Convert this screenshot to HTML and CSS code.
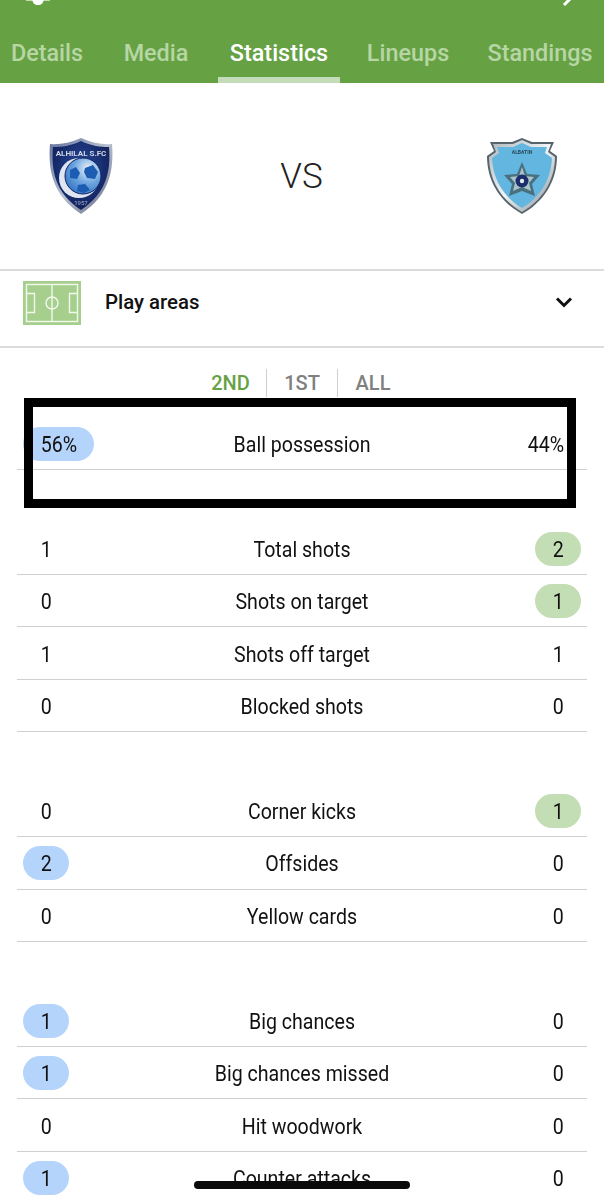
FILE: index.html
```html
<!DOCTYPE html>
<html lang="en">
<head>
<meta charset="utf-8">
<title>Statistics</title>
<link rel="stylesheet" href="styles.css">
</head>
<body>
<div class="page">
  <header class="header">
    <div class="topbar">
      <svg class="top-left" width="24" height="6" viewBox="0 0 24 6"><path d="M0 0h24v.8H0z" fill="#dfeed6"/><path d="M6.500 0h11c0 3-2.400 5-5.500 5s-5.500-2-5.500-5z" fill="#fff"/></svg>
      <svg class="top-right" width="16" height="7" viewBox="0 0 16 7"><path d="M14 -2L7 5" stroke="#fff" stroke-width="3" fill="none"/></svg>
    </div>
    <nav class="tabs">
      <a class="tab tab-details">Details</a>
      <a class="tab tab-media">Media</a>
      <a class="tab tab-stats active">Statistics</a>
      <a class="tab tab-lineups">Lineups</a>
      <a class="tab tab-standings">Standings</a>
    </nav>
  </header>

  <section class="match">
    <svg class="crest" width="66" height="78" viewBox="0 0 66 78">
      <defs>
        <linearGradient id="hilalRim" x1="0" y1="0" x2="1" y2="1"><stop offset="0" stop-color="#5f6f9c"/><stop offset=".5" stop-color="#b9c0d0"/><stop offset="1" stop-color="#5a6280"/></linearGradient>
        <radialGradient id="hilalBody" cx=".5" cy=".4" r=".7"><stop offset="0" stop-color="#27489c"/><stop offset="1" stop-color="#0d1a4e"/></radialGradient>
        <radialGradient id="hilalBall" cx=".65" cy=".3" r=".8"><stop offset="0" stop-color="#eef3f9"/><stop offset=".5" stop-color="#6ea6e0"/><stop offset="1" stop-color="#2f6fc0"/></radialGradient>
        <filter id="soft" x="-5%" y="-5%" width="110%" height="110%"><feGaussianBlur stdDeviation=".35"/></filter>
      </defs>
      <g filter="url(#soft)">
        <path d="M33 1 C44 6 55 8 64 7 C66 32 62 58 33 77 C4 58 0 32 2 7 C11 8 22 6 33 1Z" fill="url(#hilalRim)"/>
        <path d="M33 4 C43 9 53 10 61 10 C63 33 59 56 33 73 C7 56 3 33 5 10 C13 10 23 9 33 4Z" fill="url(#hilalBody)"/>
        <text x="33" y="19" class="crest-text" text-anchor="middle">ALHILAL S.FC</text>
        <circle cx="31" cy="41" r="20" fill="#dfe6f2"/>
        <circle cx="35" cy="39" r="18" fill="url(#hilalBall)" stroke="#14245f"/>
        <path d="M37 31l8-3 5 7-3 7-8-1-3-6zM22 33l6-3 4 6-3 6-7-1zM30 48l7-1 5 6-6 3-7-2z" fill="#1c5cb2"/>
        <text x="33" y="68" class="crest-year" text-anchor="middle">1957</text>
      </g>
    </svg>
    <div class="vs">VS</div>
    <svg class="crest" width="72" height="78" viewBox="0 0 72 78">
      <defs>
        <linearGradient id="batinRim" x1="0" y1="0" x2="1" y2="1"><stop offset="0" stop-color="#aab4ba"/><stop offset=".5" stop-color="#f2f4f5"/><stop offset="1" stop-color="#7c8a92"/></linearGradient>
      </defs>
      <g filter="url(#soft)">
        <path d="M36 1 L46 5 L68 5 L64 14 L71 19 C71 46 56 66 36 77 C16 66 1 46 1 19 L8 14 L4 5 L26 5Z" fill="#55646d"/>
        <path d="M36 3 L45 7 L65 7 L62 15 L69 20 C69 45 55 64 36 75 C17 64 3 45 3 20 L10 15 L7 7 L27 7Z" fill="url(#batinRim)"/>
        <path d="M36 6 L45 10 L61 10 L59 16 L66 21 C65 44 53 61 36 71 C19 61 7 44 6 21 L13 16 L11 10 L27 10Z" fill="#62b6e0"/>
        <text x="36" y="17" class="crest-name" text-anchor="middle">ALBATIN</text>
        <path d="M36 25 L41 37 L54 38 L46 47 L49 59 L36 54 L23 59 L26 47 L18 38 L31 37Z" fill="#4a6f7d"/>
        <path d="M36 30 L39 39 L48 40 L43 46 L45 54 L36 50 L27 54 L29 46 L24 40 L33 39Z" fill="#a9c2cc"/>
        <circle cx="36" cy="44" r="6.500" fill="#1e2d6b"/>
        <circle cx="36" cy="44" r="2.200" fill="#dfe8ee"/>
      </g>
    </svg>
  </section>

  <section class="areas">
    <svg class="pitch" width="58" height="44" viewBox="0 0 58 44">
      <rect width="58" height="44" fill="#a6cf8d"/>
      <g fill="none" stroke="#f3f8ef" stroke-width="1.400">
        <rect x="3.500" y="3.500" width="51" height="37"/>
        <path d="M29 3.500v37"/>
        <circle cx="29" cy="22" r="6"/>
        <path d="M3.500 12.500h8v19h-8M54.500 12.500h-8v19h8"/>
      </g>
    </svg>
    <span class="areas-label">Play areas</span>
    <svg class="chevron" width="18" height="12" viewBox="0 0 18 12"><path d="M2 2.500l7 7 7-7" fill="none" stroke="#111" stroke-width="3"/></svg>
  </section>

  <div class="periods">
    <span class="period current">2ND</span>
    <span class="period">1ST</span>
    <span class="period">ALL</span>
  </div>

  <section class="stats">
    <div class="group">
      <div class="row"><span class="val"><b class="pill blue wide"><span class="num">56%</span></b></span><span class="name">Ball possession</span><span class="val end"><b class="pill wide"><span class="num">44%</span></b></span></div>
    </div>
    <div class="group">
      <div class="row"><span class="val"><b class="pill"><span class="num">1</span></b></span><span class="name">Total shots</span><span class="val end"><b class="pill green"><span class="num">2</span></b></span></div>
      <div class="row"><span class="val"><b class="pill"><span class="num">0</span></b></span><span class="name">Shots on target</span><span class="val end"><b class="pill green"><span class="num">1</span></b></span></div>
      <div class="row"><span class="val"><b class="pill"><span class="num">1</span></b></span><span class="name">Shots off target</span><span class="val end"><b class="pill"><span class="num">1</span></b></span></div>
      <div class="row"><span class="val"><b class="pill"><span class="num">0</span></b></span><span class="name">Blocked shots</span><span class="val end"><b class="pill"><span class="num">0</span></b></span></div>
    </div>
    <div class="group">
      <div class="row"><span class="val"><b class="pill"><span class="num">0</span></b></span><span class="name">Corner kicks</span><span class="val end"><b class="pill green"><span class="num">1</span></b></span></div>
      <div class="row"><span class="val"><b class="pill blue"><span class="num">2</span></b></span><span class="name">Offsides</span><span class="val end"><b class="pill"><span class="num">0</span></b></span></div>
      <div class="row"><span class="val"><b class="pill"><span class="num">0</span></b></span><span class="name">Yellow cards</span><span class="val end"><b class="pill"><span class="num">0</span></b></span></div>
    </div>
    <div class="group">
      <div class="row"><span class="val"><b class="pill blue"><span class="num">1</span></b></span><span class="name">Big chances</span><span class="val end"><b class="pill"><span class="num">0</span></b></span></div>
      <div class="row"><span class="val"><b class="pill blue"><span class="num">1</span></b></span><span class="name">Big chances missed</span><span class="val end"><b class="pill"><span class="num">0</span></b></span></div>
      <div class="row"><span class="val"><b class="pill"><span class="num">0</span></b></span><span class="name">Hit woodwork</span><span class="val end"><b class="pill"><span class="num">0</span></b></span></div>
      <div class="row"><span class="val"><b class="pill blue"><span class="num">1</span></b></span><span class="name">Counter attacks</span><span class="val end"><b class="pill"><span class="num">0</span></b></span></div>
    </div>
  </section>

  <div class="highlight"></div>
  <div class="home-bar"></div>
</div>
</body>
</html>
```
FILE: styles.css
```css
* { box-sizing: border-box; }
html, body { margin: 0; padding: 0; background: #fff; }
.page {
  position: relative;
  width: 604px;
  height: 1200px;
  overflow: hidden;
  font-family: Roboto, "Liberation Sans", sans-serif;
  color: #111;
}
.header { height: 83px; background: #66a244; display: flex; flex-direction: column; }
.topbar { height: 33px; display: flex; justify-content: space-between; align-items: flex-start; padding: 0 31px 0 26px; }
.tabs { position: relative; flex: 1; display: flex; }
.tab {
  position: relative;
  display: flex;
  justify-content: center;
  padding-top: 6px;
  font-size: 23.400px;
  font-weight: 500;
  color: #b7d6a4;
  white-space: nowrap;
}
.tab-details { width: 94px; }
.tab-media { width: 124px; }
.tab-stats { width: 122px; }
.tab-lineups { width: 136px; }
.tab-standings { width: 128px; }
.tab.active { color: #fff; }
.tab.active::after {
  content: "";
  position: absolute;
  left: 0; right: 0; bottom: 0;
  height: 6px;
  background: #c5dcb8;
}
.match {
  height: 188px;
  display: flex;
  justify-content: space-between;
  align-items: center;
  padding: 0 46px 0 48px;
  border-bottom: 2px solid #dcdcdc;
}
.vs { font-size: 35px; font-weight: 300; color: #222; margin-left: 3px; }
.crest { display: block; }
.crest-text { font-family: Roboto, sans-serif; font-size: 8px; font-weight: 700; fill: #cfd6e6; }
.crest-year { font-family: Roboto, sans-serif; font-size: 6px; fill: #aab4cc; }
.crest-name { font-family: Roboto, sans-serif; font-size: 5px; font-weight: 700; fill: #2c4a5a; }
.areas {
  height: 77px;
  display: flex;
  align-items: center;
  padding: 0 31px 12px 23px;
  border-bottom: 2px solid #dcdcdc;
}
.pitch { display: block; margin-right: 24px; }
.areas-label { flex: 1; font-size: 20.400px; font-weight: 500; color: #111; padding-bottom: 2px; }
.chevron { margin-bottom: 2px; }
.periods { height: 51px; display: flex; justify-content: center; padding-top: 21px; margin-left: -1px; }
.period {
  width: 71px;
  height: 28px;
  text-align: center;
  font-size: 20px;
  font-weight: 500;
  line-height: 28px;
  color: #808080;
  border-left: 1px solid #cfcfcf;
}
.period:first-child { border-left: 0; }
.period.current { color: #66a244; }
.stats { padding: 18.700px 17px 0; }
.group { margin-bottom: 52.600px; }
.row {
  height: 52.400px;
  display: flex;
  align-items: center;
  justify-content: space-between;
  padding: 1px 6px 0;
  border-bottom: 1px solid #cfcfcf;
}
.val { width: 150px; display: flex; }
.val.end { justify-content: flex-end; }
.name { flex: 1; text-align: center; font-size: 22.500px; white-space: nowrap; transform: scaleX(.87); }
.pill {
  display: block;
  width: 46px;
  height: 34px;
  border-radius: 17px;
  text-align: center;
  font-size: 22.500px;
  font-weight: 400;
  line-height: 34px;
}
.pill.wide { width: 71px; }
.pill.blue { background: #b5d4fb; }
.pill.green { background: #c3deb4; }
.num { display: inline-block; transform: scaleX(.87); }
.highlight {
  position: absolute;
  left: 24px;
  top: 398px;
  width: 552px;
  height: 110px;
  border: 9px solid #000;
}
.home-bar {
  position: absolute;
  left: 194px;
  top: 1181px;
  width: 216px;
  height: 8px;
  border-radius: 4px;
  background: #0a0a0a;
}
```
